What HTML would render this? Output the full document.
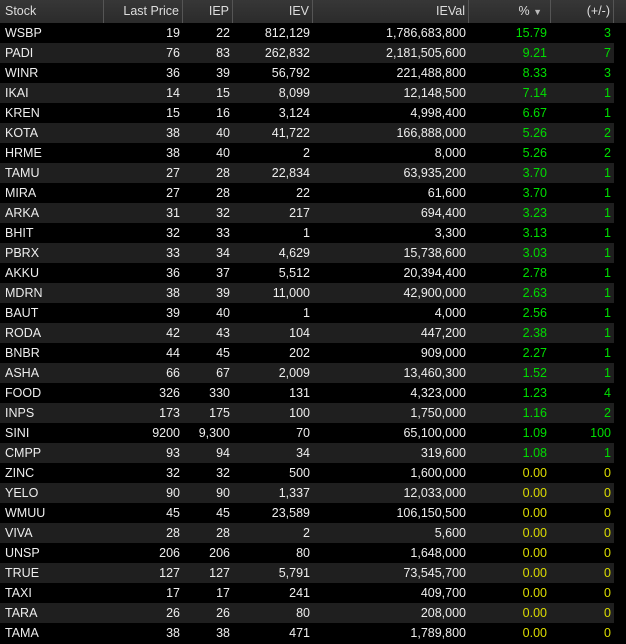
<!DOCTYPE html>
<html><head><style>
body{margin:0;background:#000;width:626px;height:644px;overflow:hidden;font-family:"Liberation Sans",Arial,sans-serif;font-size:12.5px}
.hd{position:absolute;left:0;top:0;width:626px;height:23px;background:linear-gradient(#373737,#2b2b2b)}
.hd div{position:absolute;top:0;height:23px;line-height:23px;color:#ddd;border-right:1px solid #555;box-sizing:border-box;padding:0 3px}
.r{position:absolute;left:0;width:614px;height:20px;line-height:20px;color:#eee}
.r.g{background:#1f1f1f}
.r span{position:absolute;top:0;box-sizing:border-box;padding:0 3px;text-align:right;white-space:nowrap}
.r span:nth-child(1){left:0;width:103px;text-align:left;padding-left:5px}
.r span:nth-child(2){left:103px;width:80px}
.r span:nth-child(3){left:183px;width:50px}
.r span:nth-child(4){left:233px;width:79px;padding-right:2px}
.r span:nth-child(5){left:312px;width:156px;padding-right:2px}
.r span:nth-child(6){left:468px;width:82px;padding-right:3px;color:#0d0}
.r span:nth-child(7){left:550px;width:63px;padding-right:2px;color:#0d0}
.r.y span:nth-child(6),.r.y span:nth-child(7){color:#dd0}
</style></head><body>
<div class="hd">
<div style="left:0;width:104px;padding-left:5px">Stock</div>
<div style="left:104px;width:79px;text-align:right">Last Price</div>
<div style="left:183px;width:50px;text-align:right">IEP</div>
<div style="left:233px;width:80px;text-align:right">IEV</div>
<div style="left:313px;width:156px;text-align:right">IEVal</div>
<div style="left:469px;width:82px;text-align:right;padding-right:8px">% <span style="font-size:9px;color:#bbb">&#9660;</span></div>
<div style="left:551px;width:63px;text-align:right">(+/-)</div>
</div>
<div class="r" style="top:23px"><span>WSBP</span><span>19</span><span>22</span><span>812,129</span><span>1,786,683,800</span><span>15.79</span><span>3</span></div>
<div class="r g" style="top:43px"><span>PADI</span><span>76</span><span>83</span><span>262,832</span><span>2,181,505,600</span><span>9.21</span><span>7</span></div>
<div class="r" style="top:63px"><span>WINR</span><span>36</span><span>39</span><span>56,792</span><span>221,488,800</span><span>8.33</span><span>3</span></div>
<div class="r g" style="top:83px"><span>IKAI</span><span>14</span><span>15</span><span>8,099</span><span>12,148,500</span><span>7.14</span><span>1</span></div>
<div class="r" style="top:103px"><span>KREN</span><span>15</span><span>16</span><span>3,124</span><span>4,998,400</span><span>6.67</span><span>1</span></div>
<div class="r g" style="top:123px"><span>KOTA</span><span>38</span><span>40</span><span>41,722</span><span>166,888,000</span><span>5.26</span><span>2</span></div>
<div class="r" style="top:143px"><span>HRME</span><span>38</span><span>40</span><span>2</span><span>8,000</span><span>5.26</span><span>2</span></div>
<div class="r g" style="top:163px"><span>TAMU</span><span>27</span><span>28</span><span>22,834</span><span>63,935,200</span><span>3.70</span><span>1</span></div>
<div class="r" style="top:183px"><span>MIRA</span><span>27</span><span>28</span><span>22</span><span>61,600</span><span>3.70</span><span>1</span></div>
<div class="r g" style="top:203px"><span>ARKA</span><span>31</span><span>32</span><span>217</span><span>694,400</span><span>3.23</span><span>1</span></div>
<div class="r" style="top:223px"><span>BHIT</span><span>32</span><span>33</span><span>1</span><span>3,300</span><span>3.13</span><span>1</span></div>
<div class="r g" style="top:243px"><span>PBRX</span><span>33</span><span>34</span><span>4,629</span><span>15,738,600</span><span>3.03</span><span>1</span></div>
<div class="r" style="top:263px"><span>AKKU</span><span>36</span><span>37</span><span>5,512</span><span>20,394,400</span><span>2.78</span><span>1</span></div>
<div class="r g" style="top:283px"><span>MDRN</span><span>38</span><span>39</span><span>11,000</span><span>42,900,000</span><span>2.63</span><span>1</span></div>
<div class="r" style="top:303px"><span>BAUT</span><span>39</span><span>40</span><span>1</span><span>4,000</span><span>2.56</span><span>1</span></div>
<div class="r g" style="top:323px"><span>RODA</span><span>42</span><span>43</span><span>104</span><span>447,200</span><span>2.38</span><span>1</span></div>
<div class="r" style="top:343px"><span>BNBR</span><span>44</span><span>45</span><span>202</span><span>909,000</span><span>2.27</span><span>1</span></div>
<div class="r g" style="top:363px"><span>ASHA</span><span>66</span><span>67</span><span>2,009</span><span>13,460,300</span><span>1.52</span><span>1</span></div>
<div class="r" style="top:383px"><span>FOOD</span><span>326</span><span>330</span><span>131</span><span>4,323,000</span><span>1.23</span><span>4</span></div>
<div class="r g" style="top:403px"><span>INPS</span><span>173</span><span>175</span><span>100</span><span>1,750,000</span><span>1.16</span><span>2</span></div>
<div class="r" style="top:423px"><span>SINI</span><span>9200</span><span>9,300</span><span>70</span><span>65,100,000</span><span>1.09</span><span>100</span></div>
<div class="r g" style="top:443px"><span>CMPP</span><span>93</span><span>94</span><span>34</span><span>319,600</span><span>1.08</span><span>1</span></div>
<div class="r y" style="top:463px"><span>ZINC</span><span>32</span><span>32</span><span>500</span><span>1,600,000</span><span>0.00</span><span>0</span></div>
<div class="r g y" style="top:483px"><span>YELO</span><span>90</span><span>90</span><span>1,337</span><span>12,033,000</span><span>0.00</span><span>0</span></div>
<div class="r y" style="top:503px"><span>WMUU</span><span>45</span><span>45</span><span>23,589</span><span>106,150,500</span><span>0.00</span><span>0</span></div>
<div class="r g y" style="top:523px"><span>VIVA</span><span>28</span><span>28</span><span>2</span><span>5,600</span><span>0.00</span><span>0</span></div>
<div class="r y" style="top:543px"><span>UNSP</span><span>206</span><span>206</span><span>80</span><span>1,648,000</span><span>0.00</span><span>0</span></div>
<div class="r g y" style="top:563px"><span>TRUE</span><span>127</span><span>127</span><span>5,791</span><span>73,545,700</span><span>0.00</span><span>0</span></div>
<div class="r y" style="top:583px"><span>TAXI</span><span>17</span><span>17</span><span>241</span><span>409,700</span><span>0.00</span><span>0</span></div>
<div class="r g y" style="top:603px"><span>TARA</span><span>26</span><span>26</span><span>80</span><span>208,000</span><span>0.00</span><span>0</span></div>
<div class="r y" style="top:623px"><span>TAMA</span><span>38</span><span>38</span><span>471</span><span>1,789,800</span><span>0.00</span><span>0</span></div>
</body></html>
